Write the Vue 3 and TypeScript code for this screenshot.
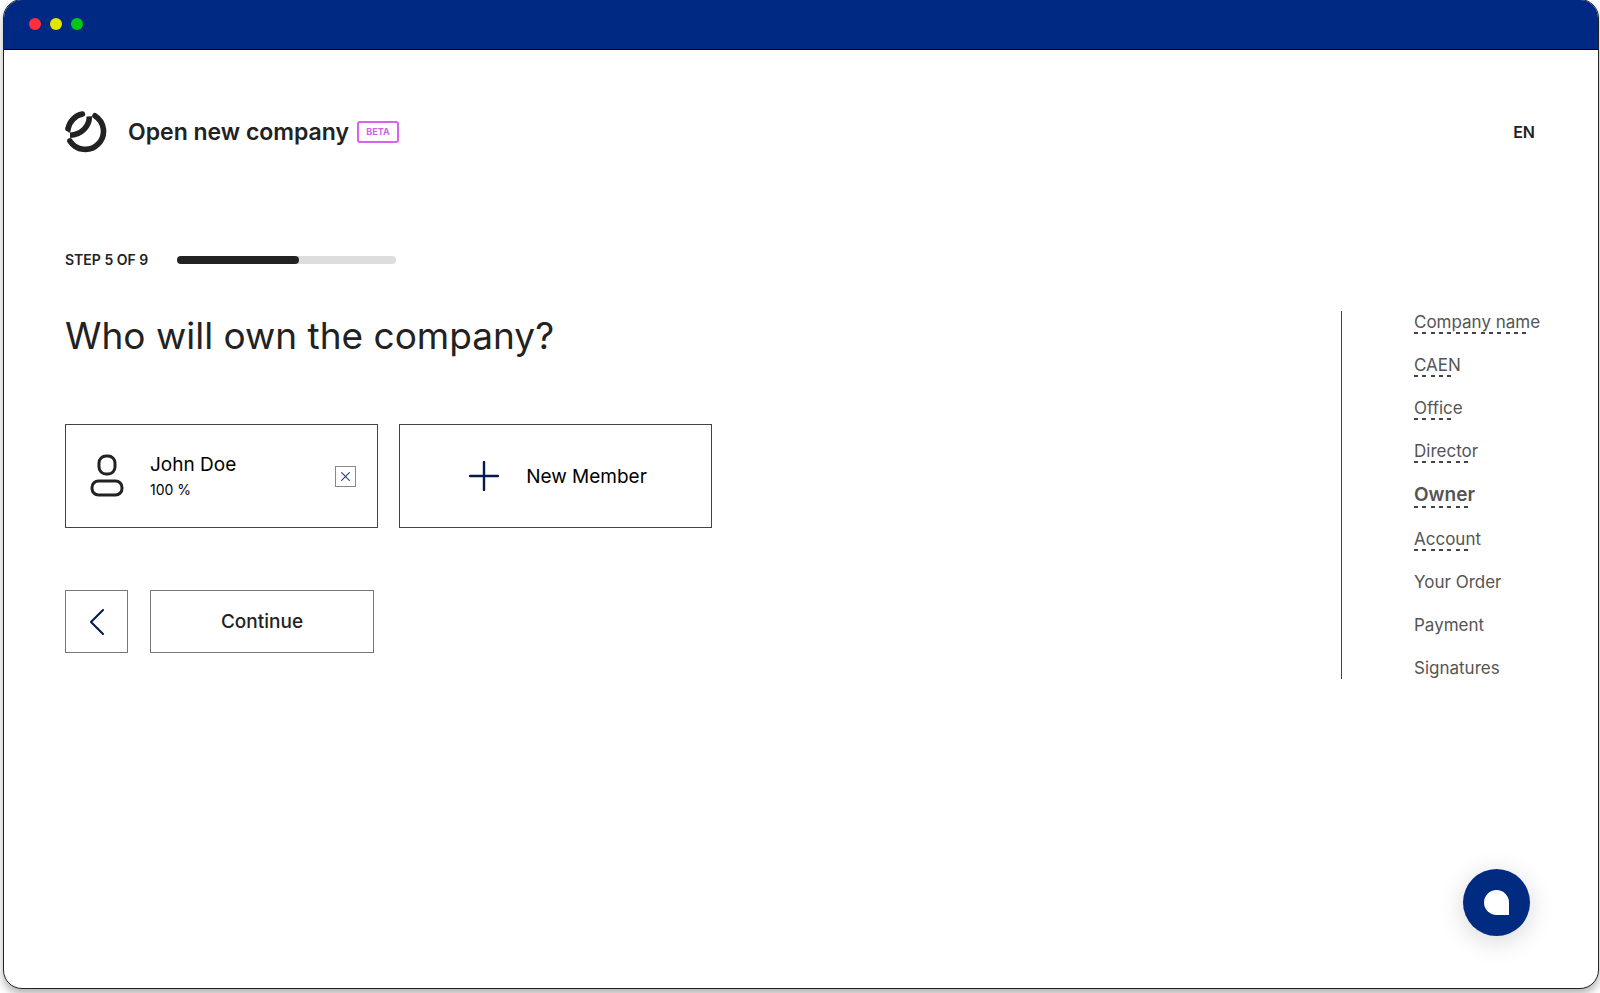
<script setup lang="ts">
interface Step {
  label: string
  visited: boolean
  current?: boolean
}

const steps: Step[] = [
  { label: 'Company name', visited: true },
  { label: 'CAEN', visited: true },
  { label: 'Office', visited: true },
  { label: 'Director', visited: true },
  { label: 'Owner', visited: true, current: true },
  { label: 'Account', visited: true },
  { label: 'Your Order', visited: false },
  { label: 'Payment', visited: false },
  { label: 'Signatures', visited: false },
]

const total = steps.length
const current = steps.findIndex((s) => s.current) + 1
const progress = `${(current / total) * 100}%`
</script>

<template>
  <div class="window">
    <div class="titlebar">
      <span class="dot red"></span>
      <span class="dot yellow"></span>
      <span class="dot green"></span>
    </div>

    <header class="header">
      <svg class="logo" viewBox="0 0 42 42" width="42" height="42" fill="none" stroke="#222" stroke-width="5.6">
        <path d="M30 4.8A18.2 18.2 0 1 1 4.9 29.9" stroke-linecap="round" />
        <path d="M3.1 17.6A18.2 18.2 0 0 1 17.4 3.1" stroke-linecap="round" />
        <path d="M0.4 16.6L5.8 17.6L5.2 21.6L3.8 21.4L0.6 18.6Z" fill="#222" stroke="none" />
        <path d="M24.3 5.4C24.6 15.5 16 24 5 24.2" />
      </svg>
      <h1 class="title">Open new company</h1>
      <span class="badge">BETA</span>
      <button class="lang" type="button">EN</button>
    </header>

    <div class="progress-row">
      <span id="step-label" class="step-label">STEP {{ current }} OF {{ total }}</span>
      <div class="bar" role="progressbar" aria-labelledby="step-label" :aria-valuenow="current" aria-valuemin="0" :aria-valuemax="total">
        <div class="bar-fill" :style="{ width: progress }"></div>
      </div>
    </div>

    <div class="body">
      <main class="main">
        <h2 class="question">Who will own the company?</h2>

        <div class="cards">
          <article class="card member">
            <svg width="34" height="44" viewBox="0 0 34 44" fill="none" stroke="#222" stroke-width="3">
              <rect x="9" y="2" width="16" height="18" rx="7" />
              <rect x="2" y="27" width="30" height="14" rx="6.5" />
            </svg>
            <div class="member-info">
              <span class="member-name">John Doe</span>
              <span class="member-share">100 %</span>
            </div>
            <button class="remove" type="button" aria-label="Remove John Doe">
              <svg width="9" height="9" viewBox="0 0 9 9" stroke="#33476f" stroke-width="1.2">
                <path d="M0.3 0.3L8.7 8.7M8.7 0.3L0.3 8.7" />
              </svg>
            </button>
          </article>

          <button class="card add" type="button">
            <svg width="30" height="30" viewBox="0 0 30 30" stroke="#04194d" stroke-width="2.4" stroke-linecap="round">
              <path d="M15 1V29M1 15H29" />
            </svg>
            <span>New Member</span>
          </button>
        </div>

        <div class="actions">
          <button class="back" type="button" aria-label="Back">
            <svg width="14" height="26" viewBox="0 0 14 26" fill="none" stroke="#04194d" stroke-width="2" stroke-linecap="round" stroke-linejoin="round">
              <path d="M13 1L1 13L13 25" />
            </svg>
          </button>
          <button class="continue" type="button">Continue</button>
        </div>
      </main>

      <nav class="steps" aria-label="Steps">
        <template v-for="step in steps" :key="step.label">
          <a v-if="step.visited" href="#" class="step visited" :class="{ current: step.current }">{{ step.label }}</a>
          <span v-else class="step">{{ step.label }}</span>
        </template>
      </nav>
    </div>

    <button class="chat" type="button" aria-label="Open chat">
      <span class="bubble"></span>
    </button>
  </div>
</template>

<style>
body {
  margin: 0;
  background: #fff;
}
#app {
  display: flow-root;
}
</style>

<style scoped>
.window {
  position: relative;
  box-sizing: border-box;
  min-height: calc(100vh - 3px);
  margin: -1px 1px 4px 3px;
  border: 1px solid #222;
  border-radius: 19px;
  overflow: hidden;
  background: #fff;
  box-shadow: 0 5px 8px rgba(0, 0, 0, 0.3);
  font-family: Inter, "Liberation Sans", sans-serif;
  color: #222;
}
button {
  font-family: inherit;
  padding: 0;
  cursor: pointer;
}
svg {
  display: block;
  flex: none;
}
.titlebar {
  display: flex;
  align-items: center;
  gap: 9px;
  height: 48px;
  padding: 0 25px 1px;
  background: #002984;
  border-bottom: 1px solid #000;
}
.dot {
  width: 12px;
  height: 12px;
  border-radius: 50%;
}
.red {
  background: #ff2f40;
}
.yellow {
  background: #e1e600;
}
.green {
  background: #00c814;
}
.header {
  display: flex;
  align-items: center;
  padding: 61px 63px 0 61px;
}
.title {
  margin: 0 8px 0 21px;
  font-size: 23px;
  line-height: 28px;
  font-weight: 600;
}
.badge {
  box-sizing: border-box;
  width: 42px;
  border: 2px solid #d862ee;
  border-radius: 3px;
  color: #d05fe6;
  font-size: 9px;
  line-height: 18px;
  font-weight: 700;
  text-align: center;
}
.lang {
  margin-left: auto;
  border: 0;
  background: none;
  color: #222;
  font-size: 16px;
  line-height: 20px;
  font-weight: 600;
}
.progress-row {
  display: flex;
  align-items: center;
  gap: 29px;
  margin-top: 97px;
  padding-left: 61px;
}
.step-label {
  font-size: 14px;
  line-height: 20px;
  font-weight: 600;
}
.bar {
  width: 219px;
  height: 8px;
  border-radius: 4px;
  background: #ddd;
}
.bar-fill {
  height: 100%;
  border-radius: 4px;
  background: #222;
}
.body {
  display: flex;
  justify-content: space-between;
  align-items: flex-start;
  padding: 41px 63px 0 61px;
}
.question {
  margin: 0;
  font-size: 37px;
  line-height: 50px;
  font-weight: 400;
}
.cards {
  display: flex;
  gap: 21px;
  margin-top: 63px;
}
.card {
  box-sizing: border-box;
  display: flex;
  align-items: center;
  width: 313px;
  height: 104px;
  border: 1px solid #444;
  background: #fff;
  color: #000;
}
.member {
  padding: 0 21px 0 24px;
}
.member-info {
  display: flex;
  flex-direction: column;
  margin-left: 26px;
}
.member-name {
  font-size: 19px;
  line-height: 28px;
}
.member-share {
  font-size: 14px;
  line-height: 22px;
}
.remove {
  box-sizing: border-box;
  display: flex;
  align-items: center;
  justify-content: center;
  width: 21px;
  height: 21px;
  margin-left: auto;
  border: 1px solid #888;
  background: #fff;
}
.add {
  justify-content: center;
  gap: 27px;
  padding-left: 5px;
  font-size: 19px;
}
.actions {
  display: flex;
  gap: 22px;
  margin-top: 62px;
}
.back,
.continue {
  box-sizing: border-box;
  display: flex;
  align-items: center;
  justify-content: center;
  height: 63px;
  border: 1px solid #777;
  background: #fff;
}
.back {
  width: 63px;
}
.continue {
  width: 224px;
  color: #222;
  font-size: 19px;
  font-weight: 500;
}
.steps {
  display: flex;
  flex: none;
  flex-direction: column;
  align-items: flex-start;
  gap: 21px;
  width: 121px;
  padding-left: 72px;
  border-left: 1px solid #444;
  white-space: nowrap;
}
.step {
  position: relative;
  color: #555;
  font-size: 17px;
  line-height: 22px;
  text-decoration: none;
}
.current {
  font-size: 19px;
  line-height: 24px;
  font-weight: 600;
}
.visited::after {
  content: "";
  position: absolute;
  left: 0;
  right: 9px;
  bottom: -1px;
  height: 2px;
  background: repeating-linear-gradient(
    90deg,
    #444 0 4px,
    transparent 4px 8px,
    #444 8px 12px,
    transparent 12px 17px,
    #444 17px 21px,
    transparent 21px 25px
  );
}
.current::after {
  right: 5px;
}
.chat {
  position: absolute;
  right: 68px;
  bottom: 52px;
  display: flex;
  align-items: center;
  justify-content: center;
  width: 67px;
  height: 67px;
  border: 0;
  border-radius: 50%;
  background: #002b80;
  box-shadow: 0 5px 26px rgba(0, 0, 0, 0.16);
}
.bubble {
  width: 25px;
  height: 25px;
  border-radius: 50% 50% 0 50%;
  background: #fff;
}
</style>
